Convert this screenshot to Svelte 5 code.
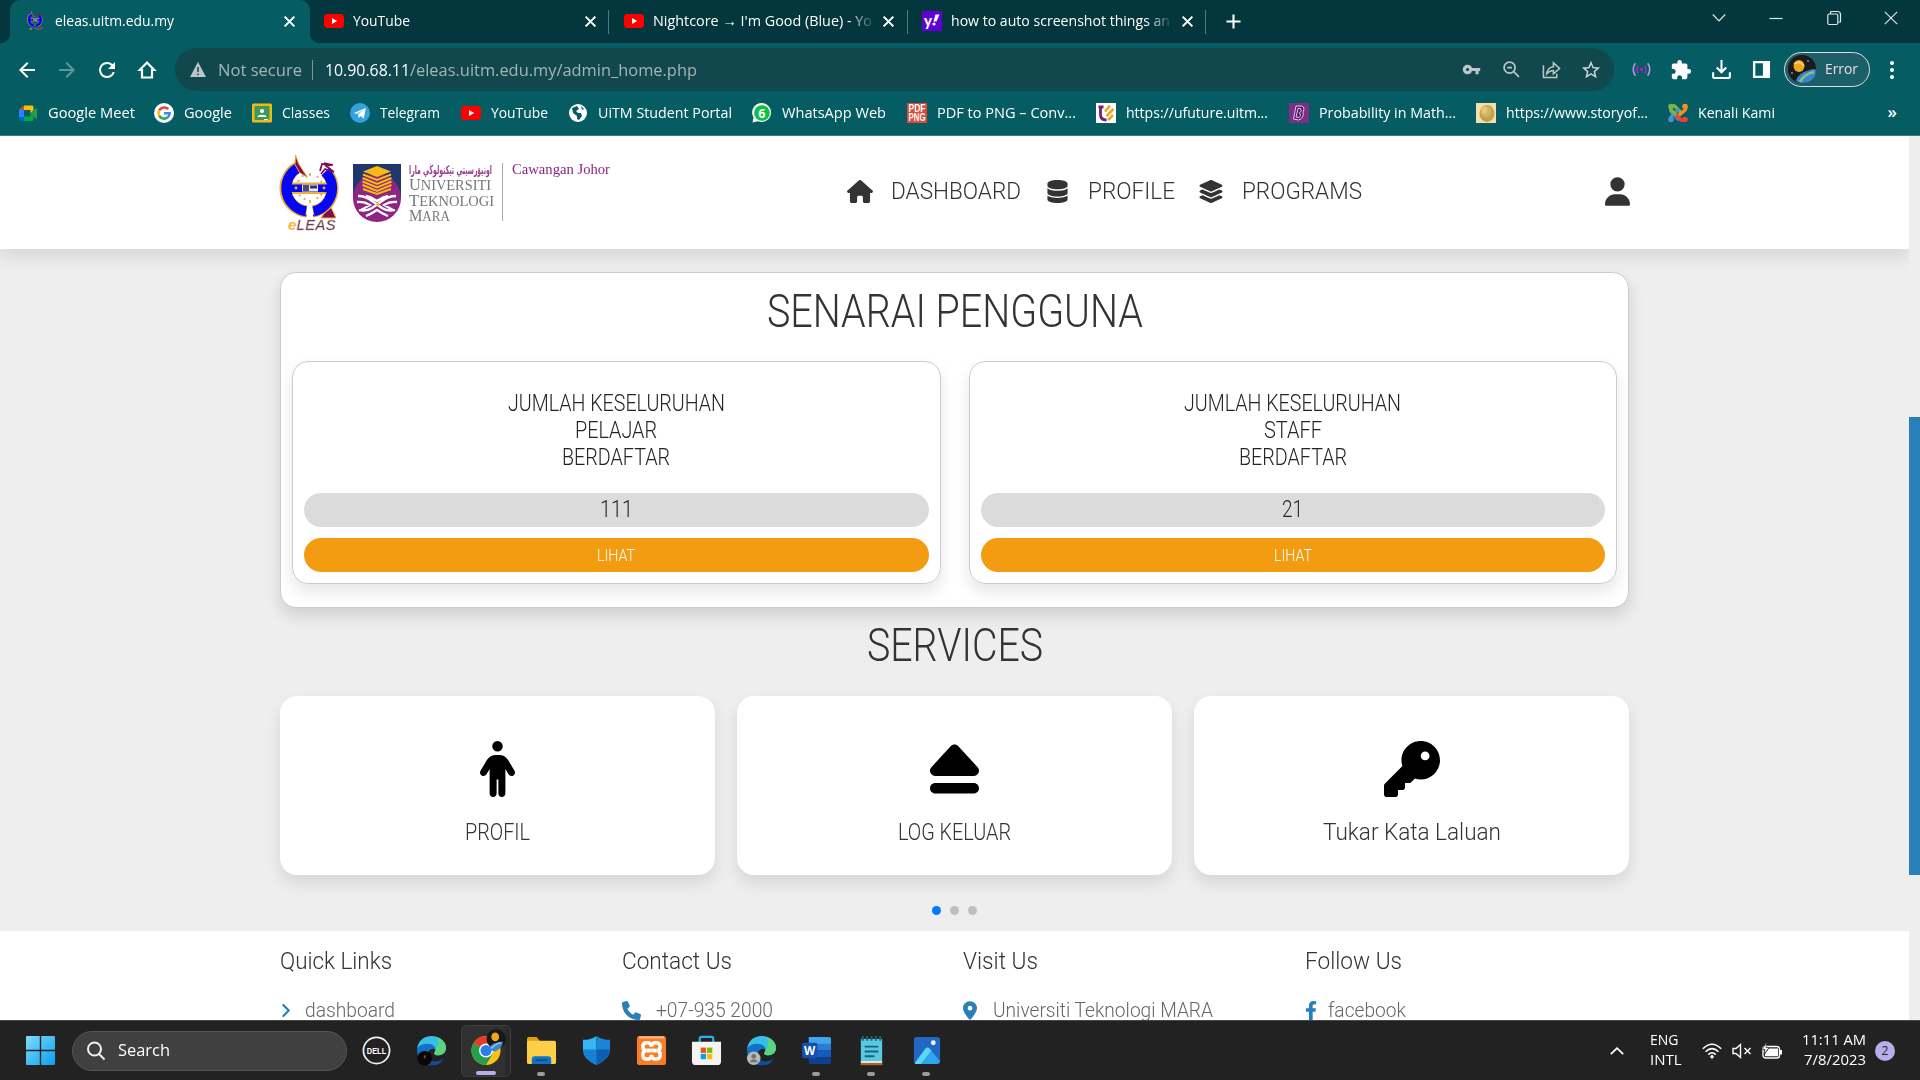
<script>
  // Scales a text run horizontally so that it fills the given width.
  function fit(node, width) {
    const natural = node.getBoundingClientRect().width;
    if (!natural) return;
    node.style.transform = `scaleX(${width / natural})`;
    node.style.marginRight = `${width - natural}px`;
  }

  const fa = {
    home: [576, 'M575.8 255.5c0 18-15 32.1-32 32.1h-32l.7 160.2c0 2.7-.2 5.4-.5 8.1V472c0 22.1-17.9 40-40 40H456c-1.1 0-2.2 0-3.3-.1c-1.4 .1-2.8 .1-4.2 .1H416 392c-22.1 0-40-17.9-40-40V448 384c0-17.7-14.3-32-32-32H256c-17.7 0-32 14.3-32 32v64 24c0 22.1-17.9 40-40 40H160 128.1c-1.5 0-3-.1-4.5-.2c-1.2 .1-2.4 .2-3.6 .2H104c-22.1 0-40-17.9-40-40V360c0-.9 0-1.9 .1-2.8V287.6H32c-18 0-32-14-32-32.1c0-9 3-17 10-24L266.4 8c7-7 15-8 22-8s15 2 21 7L564.8 231.5c8 7 12 15 11 24z'],
    database: [448, 'M448 80v48c0 44.2-100.3 80-224 80S0 172.2 0 128V80C0 35.8 100.3 0 224 0S448 35.8 448 80zM393.2 214.7c20.8-7.4 39.9-16.9 54.8-28.6V288c0 44.2-100.3 80-224 80S0 332.2 0 288V186.1c14.9 11.8 34 21.2 54.8 28.6C99.7 230.7 159.5 240 224 240s124.3-9.3 169.2-25.3zM0 346.1c14.9 11.8 34 21.2 54.8 28.6C99.7 390.7 159.5 400 224 400s124.3-9.3 169.2-25.3c20.8-7.4 39.9-16.9 54.8-28.6V432c0 44.2-100.3 80-224 80S0 476.2 0 432V346.1z'],
    layers: [576, 'M264.5 5.2c14.9-6.9 32.1-6.9 47 0l218.6 101c8.5 3.9 13.9 12.4 13.9 21.8s-5.4 17.9-13.9 21.8l-218.6 101c-14.9 6.9-32.1 6.9-47 0L45.9 149.8C37.4 145.8 32 137.3 32 128s5.4-17.9 13.9-21.8L264.5 5.2zM476.9 209.6l53.2 24.6c8.5 3.9 13.9 12.4 13.9 21.8s-5.4 17.9-13.9 21.8l-218.6 101c-14.9 6.9-32.1 6.9-47 0L45.9 277.8C37.4 273.8 32 265.3 32 256s5.4-17.9 13.9-21.8l53.2-24.6 152 70.2c23.4 10.8 50.4 10.8 73.8 0l152-70.2zm-152 198.2l152-70.2 53.2 24.6c8.5 3.9 13.9 12.4 13.9 21.8s-5.4 17.9-13.9 21.8l-218.6 101c-14.9 6.9-32.1 6.9-47 0L45.9 405.8C37.4 401.8 32 393.3 32 384s5.4-17.9 13.9-21.8l53.2-24.6 152 70.2c23.4 10.8 50.4 10.8 73.8 0z'],
    user: [448, 'M224 256A128 128 0 1 0 224 0a128 128 0 1 0 0 256zm-45.7 48C79.8 304 0 383.8 0 482.3C0 498.7 13.3 512 29.7 512H418.3c16.4 0 29.7-13.3 29.7-29.7C448 383.8 368.2 304 269.7 304H178.3z'],
    person: [320, 'M112 48a48 48 0 1 1 96 0 48 48 0 1 1 -96 0zm40 304V480c0 17.7-14.3 32-32 32s-32-14.3-32-32V256.9L59.4 304.5c-9.1 15.1-28.8 20-43.9 10.9s-20-28.8-10.9-43.9l58.3-97c17.4-28.9 48.6-46.6 82.3-46.6h29.7c33.7 0 64.9 17.7 82.3 46.6l58.3 97c9.1 15.1 4.2 34.8-10.9 43.9s-34.8 4.2-43.9-10.9L232 256.9V480c0 17.7-14.3 32-32 32s-32-14.3-32-32V352H152z'],
    eject: [448, 'M224 32c13.5 0 26.3 5.6 35.4 15.6l176 192c12.9 14 16.2 34.3 8.6 51.8S419 320 400 320H48c-19 0-36.3-11.2-43.9-28.7s-4.3-37.7 8.6-51.8l176-192C197.7 37.6 210.5 32 224 32zM0 432c0-26.5 21.5-48 48-48H400c26.5 0 48 21.5 48 48s-21.5 48-48 48H48c-26.5 0-48-21.5-48-48z'],
    key: [512, 'M336 352c97.2 0 176-78.8 176-176S433.2 0 336 0S160 78.8 160 176c0 18.7 2.9 36.8 8.3 53.7L7 391c-4.5 4.5-7 10.6-7 17v80c0 13.3 10.7 24 24 24h80c13.3 0 24-10.7 24-24V448h40c13.3 0 24-10.7 24-24V384h40c6.4 0 12.5-2.5 17-7l33.3-33.3c16.9 5.4 35 8.3 53.7 8.3zM376 96a40 40 0 1 1 0 80 40 40 0 1 1 0-80z'],
    phone: [512, 'M164.9 24.6c-7.7-18.6-28-28.5-47.4-23.2l-88 24C12.1 30.2 0 46 0 64C0 311.4 200.6 512 448 512c18 0 33.8-12.1 38.6-29.5l24-88c5.3-19.4-4.6-39.7-23.2-47.4l-96-40c-16.3-6.8-35.2-2.1-46.3 11.6L304.7 368C234.3 334.7 177.3 277.7 144 207.3L193.3 167c13.7-11.2 18.4-30 11.6-46.3l-40-96z'],
    pin: [384, 'M215.7 499.2C267 435 384 279.4 384 192C384 86 298 0 192 0S0 86 0 192c0 87.4 117 243 168.3 307.2c12.3 15.3 35.1 15.3 47.4 0zM192 128a64 64 0 1 1 0 128 64 64 0 1 1 0-128z'],
    angle: [320, 'M278.6 233.4c12.5 12.5 12.5 32.8 0 45.3l-160 160c-12.5 12.5-32.8 12.5-45.3 0s-12.5-32.8 0-45.3L210.7 256 73.4 118.6c-12.5-12.5-12.5-32.8 0-45.3s32.8-12.5 45.3 0l160 160z'],
    facebook: [320, 'M279.14 288l14.22-92.66h-88.91v-60.13c0-25.35 12.42-50.06 52.24-50.06h40.42V6.26S260.43 0 225.36 0c-73.22 0-121.08 44.38-121.08 124.72v70.62H22.89V288h81.39v224h100.17V288z'],
  };

  const tabs = [
    { icon: 'eleas', text: 'eleas.uitm.edu.my', w: 119, active: true },
    { icon: 'youtube', text: 'YouTube', w: 57 },
    { icon: 'youtube', text: "Nightcore → I'm Good (Blue) - Yo", w: 219, fade: true },
    { icon: 'yahoo', text: 'how to auto screenshot things an', w: 219, fade: true },
  ];

  const bookmarks = [
    ['meet', 'Google Meet', 87, 0],
    ['google', 'Google', 48, 19],
    ['classes', 'Classes', 48, 20],
    ['telegram', 'Telegram', 60, 20],
    ['youtube', 'YouTube', 57, 21],
    ['globe', 'UiTM Student Portal', 134, 20],
    ['whatsapp', 'WhatsApp Web', 104, 20],
    ['pdf', 'PDF to PNG – Conv...', 139, 21],
    ['ufuture', 'https://ufuture.uitm...', 142, 20],
    ['prob', 'Probability in Math...', 137, 21],
    ['story', 'https://www.storyof...', 142, 20],
    ['joomla', 'Kenali Kami', 77, 20],
  ];

  const nav = [
    ['home', 'DASHBOARD', 130],
    ['database', 'PROFILE', 87],
    ['layers', 'PROGRAMS', 120],
  ];

  const counts = [
    { lines: [['JUMLAH KESELURUHAN', 217], ['PELAJAR', 82], ['BERDAFTAR', 108]], n: '111', nw: 33 },
    { lines: [['JUMLAH KESELURUHAN', 217], ['STAFF', 58], ['BERDAFTAR', 108]], n: '21', nw: 21 },
  ];

  const services = [
    ['person', 'PROFIL', 65],
    ['eject', 'LOG KELUAR', 113],
    ['key', 'Tukar Kata Laluan', 178],
  ];

  const footer = [
    ['Quick Links', 112, 'angle', 'dashboard', 90],
    ['Contact Us', 110, 'phone', '+07-935 2000', 117],
    ['Visit Us', 75, 'pin', 'Universiti Teknologi MARA', 220],
    ['Follow Us', 97, 'facebook', 'facebook', 78],
  ];

  const apps = [
    ['dell', ''], ['edge', ''], ['chrome', 'on'], ['folder', 'dot'], ['defender', ''], ['xampp', ''],
    ['store', ''], ['edge2', ''], ['word', 'dot'], ['notepad', 'dot'], ['photos', 'dot'],
  ];
</script>

{#snippet faIcon(name, cls)}
  <svg class={cls} viewBox="0 0 {fa[name][0]} 512" fill="currentColor"><path d={fa[name][1]} /></svg>
{/snippet}

{#snippet close()}
  <svg class="x" viewBox="0 0 12 12"><path d="M1.5 1.5l9 9M10.5 1.5l-9 9" stroke="#fff" stroke-width="1.9" /></svg>
{/snippet}

{#snippet eleasMark(cls)}
  <svg class={cls} viewBox="0 0 59 78">
    <path d="M50 51l6 13H41z" fill="#850a55" stroke="#efaf32" />
    <g fill="none" stroke="#efaf32" stroke-width="12"><path d="M17.8 13.4A23.500 23.500 0 0 0 26.600 57.500M45.500 17.500A23.500 23.500 0 0 1 33 57.500" /></g>
    <path d="M5 30H55M5 38.500H55" stroke="#efaf32" stroke-width="3" />
    <g fill="none" stroke="#0506f5" stroke-width="10"><path d="M17.600 14A23.500 23.500 0 0 0 26 57.300M45.200 17.700A23.500 23.500 0 0 1 33.600 57.300" /></g>
    <path d="M5 30.500h50v7.500H5z" fill="#0506f5" />
    <path d="M26 60.500v2M33.500 60.500v2" stroke="#0506f5" stroke-width="1" />
    <path d="M22 30.500h16v7H22z" fill="#e9e9f2" /><path d="M23 31h6v6h-6z" fill="#554a66" /><path d="M30 33h7" stroke="#336" stroke-width="3" />
    <circle cx="16" cy="34" r="1.400" fill="#e5ac3a" /><circle cx="44" cy="34" r="1.400" fill="#e5ac3a" />
    <path d="M17.500 27.500l2-1M22 22.500l1.500-1M30 19v3M38 22l-1 2M42 27l-1.500 1M19 42l1.500-1M24 46l1-2M30 46v3M38 45l-1-2M42 41l-1.500-1" stroke="#c9a75a" stroke-width="1.600" />
    <path d="M15.500 1l3 8.500 9 14-8-5-4.500-8z" fill="#850a55" stroke="#efaf32" stroke-width="1" />
    <path d="M40 17l2-7 10 1-6 1 8 6-9-3-4 5M44 9l9 2" fill="none" stroke="#850a55" stroke-width="1.700" />
    <text x="8" y="76" font-family="Liberation Sans" font-style="italic" font-size="15" font-weight="bold" fill="#f5b834">e</text>
    <text x="16.500" y="76" font-family="Liberation Sans" font-style="italic" font-size="14.500" fill="#2b1a86" stroke="#e4a844" stroke-width=".35" textLength="39">LEAS</text>
  </svg>
{/snippet}

{#snippet fav(name)}
  {#if name === 'eleas'}
    {@render eleasMark('fav')}
  {:else}
    <svg class="fav" viewBox="0 0 20 20">
      {#if name === 'youtube'}
        <rect y="3" width="20" height="14" rx="3.500" fill="#f00" /><path d="M8 7l5.200 3L8 13z" fill="#fff" />
      {:else if name === 'yahoo'}
        <rect width="20" height="20" fill="#5f01d1" /><text x="2" y="14.500" font-family="Lato" font-weight="900" font-size="15" fill="#fff">y</text>
        <path d="M13.500 3.500h4l-3 7h-3z" fill="#fff" /><circle cx="12" cy="13" r="1.600" fill="#fff" />
      {:else if name === 'meet'}
        <path d="M1 6.500l5-4v4z" fill="#ea4335" /><path d="M6 2.500h8.500l1 1v4l-3 3V7H6z" fill="#fbbc04" /><path d="M1 6.500h5V14H1z" fill="#2684fc" /><path d="M1 14h5v4H2l-1-1z" fill="#0066da" /><path d="M6 13.500h6.500V10l3 3v4l-1 1H6z" fill="#00ac47" /><path d="M12.500 10L18 5l1 .5v10l-1 .5z" fill="#2a9b46" />
      {:else if name === 'google'}
        <circle cx="10" cy="10" r="10" fill="#fff" />
        <g fill="none" stroke-width="2.600"><path d="M14.200 6.200A5.600 5.600 0 0 0 5.200 7.400" stroke="#ea4335" /><path d="M5.200 7.300a5.600 5.600 0 0 0 0 5.400" stroke="#fbbc05" /><path d="M5.200 12.600a5.600 5.600 0 0 0 8.600 1.600" stroke="#34a853" /><path d="M13.800 14.300A5.600 5.600 0 0 0 15.600 10.300H10" stroke="#4285f4" /></g>
      {:else if name === 'classes'}
        <rect width="20" height="19" y=".5" rx="1.500" fill="#f5b912" /><rect x="2.500" y="3" width="15" height="14" fill="#3c9a58" /><circle cx="10" cy="8" r="2.100" fill="#fff" /><path d="M5.500 14c0-3 9-3 9 0z" fill="#fff" /><path d="M12 16h4v1h-4z" fill="#fff" />
      {:else if name === 'telegram'}
        <circle cx="10" cy="10" r="10" fill="#34a2dc" /><path d="M3.800 9.900l12-4.900-2 10.500-3.400-2.500-1.900 1.900-.4-3.300 5-4.700-6.300 4z" fill="#fff" />
      {:else if name === 'globe'}
        <circle cx="10" cy="10" r="9" fill="#fff" /><path d="M4 5l5-2 2 3-3 2 2 2h3l1 3-3 4-2-1v-3l-4-3zM13 3l3 3-2 1z" fill="#055c63" />
      {:else if name === 'whatsapp'}
        <path d="M.5 19.500l1-5A9.500 9.500 0 1 1 6 18.300z" fill="#f3f6f3" /><circle cx="10" cy="10" r="7.800" fill="#0bbf47" /><text x="6.300" y="14.500" font-family="Open Sans" font-weight="700" font-size="12.500" fill="#fff">6</text>
      {:else if name === 'pdf'}
        <rect width="20" height="20" fill="#db4a3b" /><g font-family="Liberation Sans" font-weight="700" font-size="10.500" fill="#fff"><text x="1.500" y="9.300" textLength="17" lengthAdjust="spacingAndGlyphs">PDF</text><text x="1.500" y="18.300" textLength="17" lengthAdjust="spacingAndGlyphs">PNG</text></g>
      {:else if name === 'ufuture'}
        <rect width="20" height="20" fill="#fff" /><path d="M4.500 4.500v7q0 5.500 6 5.500M2.500 4h5" stroke="#6c2086" stroke-width="2.800" fill="none" /><path d="M14 2.500L9 8.500M17.500 6l-7 7M17 12l-5 5" stroke="#f2a51c" stroke-width="2.500" />
      {:else if name === 'prob'}
        <rect width="20" height="20" fill="#7d2e86" /><path d="M7 3h5.500q4 1 1.500 6 1.500 6-4.500 8L4.500 16z" fill="#5b1c66" stroke="#e6c4ea" /><path d="M9 5.500l-2 8.500 3 .5q3-2.500.5-4.500 3-2 1-4.500z" fill="none" stroke="#e6c4ea" />
      {:else if name === 'story'}
        <rect width="20" height="20" fill="#f7dfa8" /><ellipse cx="11" cy="10.500" rx="7.500" ry="8.500" fill="#c0a04e" /><ellipse cx="10" cy="8.500" rx="5.500" ry="6" fill="#cfb35f" /><ellipse cx="8.500" cy="7" rx="3" ry="3.500" fill="#e0c77c" />
      {:else if name === 'joomla'}
        <g fill="none" stroke-width="3.400" stroke-linecap="round"><path d="M3 4v4l7 8" stroke="#4a90cf" /><path d="M3 3.500q3-2 5 1l5 5" stroke="#7ab63e" /><path d="M17 3q2 3-1 5l-6 5" stroke="#f39021" /><path d="M3 17q-1-3 2-5l5-5" stroke="#4a90cf" /><path d="M17 17q-3 1-5-1l-4-4" stroke="#ee4035" /><path d="M3 4v3l4 4" stroke="#7ab63e" /></g>
        <circle cx="3" cy="3.500" r="2.800" fill="#7ab63e" /><circle cx="17" cy="3.500" r="2.800" fill="#f39021" /><circle cx="3" cy="16.500" r="2.800" fill="#4a90cf" /><circle cx="17" cy="16.500" r="2.800" fill="#ee4035" />
      {/if}
    </svg>
  {/if}
{/snippet}

{#snippet edgeMark()}
  <path d="M1 15C2 6 8 1 16 1c9 0 15 6 15 12 0 5-4 8-8 8-3 0-4-1-4-2 0-2 1-1 1-4 0-3-3-5-7-5-6 0-11 3-12 5z" fill="#39bfe5" />
  <path d="M22 2.500c6 2 9 6 9 11 0 5-4 7.500-8 7.500-3 0-4-1-4-2 0-2 1-1 1-4 3-3 4-7 2-12.500z" fill="#59d57d" />
  <path d="M1 15c1-4 6-6 11-6 5 0 8 3 8 6-1-1-3-1-5 0-3 2-4 5-2 9 2 3 7 6 14 3-3 3-7 4-11 4C7 31 1 24 1 15z" fill="#1272c8" />
  <path d="M13 24c2 4 9 5 16 0-3 5-9 8-15 7-5-2-7-9-3-14 0 2 0 4 2 7z" fill="#0d4f9e" />
{/snippet}

{#snippet appIcon(name)}
  <svg class="app-icon" viewBox="0 0 32 32">
    {#if name === 'dell'}
      <circle cx="16" cy="16" r="13.500" fill="none" stroke="#f2f2f2" stroke-width="1.800" /><text x="6" y="19.500" font-family="Liberation Sans" font-weight="700" font-size="10" fill="#fff" textLength="20" lengthAdjust="spacingAndGlyphs">DELL</text>
    {:else if name === 'edge'}
      {@render edgeMark()}<circle cx="9" cy="24" r="7.500" fill="#090707" /><path d="M9 21v3" stroke="#7b4937" stroke-width="2" />
    {:else if name === 'edge2'}
      {@render edgeMark()}<circle cx="8" cy="24" r="7" fill="#b9b9b9" /><circle cx="8" cy="22" r="2.500" fill="#737373" /><path d="M4 28c1-4 7-4 8 0z" fill="#737373" />
    {:else if name === 'chrome'}
      <circle cx="15.500" cy="16" r="15" fill="#fbc116" /><path d="M15.500 16L2.500 8.500A15 15 0 0 1 28.500 8.500H16z" fill="#e33b2e" /><path d="M15.500 16L2.500 8.500A15 15 0 0 0 15.500 31l6.500-11z" fill="#269f4b" /><circle cx="15.500" cy="16" r="7.200" fill="#fff" /><circle cx="15.500" cy="16" r="5.700" fill="#2b7de9" />
      <circle cx="26" cy="4" r="10" fill="#181818" /><path d="M18 13q6-6 15-6-1 7-7 9.500-6 1-8-3.500z" fill="#3a86da" /><path d="M21 14q4-5 10-6" fill="none" stroke="#8fc0dd" stroke-width="1.500" /><ellipse cx="25" cy="2" rx="4" ry="4.500" fill="#eda91d" />
    {:else if name === 'folder'}
      <path d="M1 4q0-2 2-2h8l3 4v6H1z" fill="#e29d0c" /><path d="M1 8q0-2 2-2h26q2 0 2 2v20q0 2-2 2H3q-2 0-2-2z" fill="#fccf47" /><path d="M6 30v-5q0-3 3-3h14q3 0 3 3v5z" fill="#0f73c5" /><path d="M10 26h12" stroke="#0a4c8a" stroke-width="2" />
    {:else if name === 'defender'}
      <path d="M16 1q-6 4-14 4v10q0 10 14 16z" fill="#35b5f3" /><path d="M16 1q6 4 14 4v10q0 10-14 16z" fill="#1b83da" /><path d="M2 15h14v16Q3 25 2 15z" fill="#1780d6" /><path d="M16 15h14q-1 10-14 16z" fill="#0c5fb0" />
    {:else if name === 'xampp'}
      <rect x="1" y="1" width="30" height="30" rx="3" fill="#f97d27" /><path d="M3 2.500h26" stroke="#ffb98a" stroke-width="2" /><path d="M11.500 8q-4.500 0-4.500 4t4 4q-4 0-4 4.500t4.500 4.500 4.500-4.500q0 4.500 4.500 4.500t4.500-4.500-4-4.500q4 0 4-4T20.500 8 16 12q0-4-4.500-4z" fill="none" stroke="#fff" stroke-width="3.600" /><path d="M11 16h10" stroke="#fff" stroke-width="4" />
    {:else if name === 'store'}
      <path d="M9 8V4q0-2 2-2h10q2 0 2 2v4" fill="none" stroke="#2bb2ee" stroke-width="2.200" /><path d="M1 7h30v20q0 4-4 4H5q-4 0-4-4z" fill="#f4f4f4" /><path d="M10 13h5.500v5.500H10z" fill="#f25022" /><path d="M16.500 13H22v5.500h-5.500z" fill="#7fba00" /><path d="M10 19.500h5.500V25H10z" fill="#00a4ef" /><path d="M16.500 19.500H22V25h-5.500z" fill="#ffb900" />
    {:else if name === 'word'}
      <path d="M8 2h21q2 0 2 2v6H8z" fill="#41a5ee" /><path d="M8 9h23v7H8z" fill="#2b7cd3" /><path d="M8 16h23v7H8z" fill="#185abd" /><path d="M8 23h23v5q0 2-2 2H10q-2 0-2-2z" fill="#103f91" /><rect x="1" y="8" width="16" height="16" rx="2" fill="#1650ac" /><text x="3" y="20.500" font-family="Open Sans" font-weight="700" font-size="12" fill="#fff">W</text>
    {:else if name === 'notepad'}
      <path d="M5 4h22v24H5z" fill="#58c8e4" /><path d="M5 27h22v4H5z" fill="#e8f0f2" /><path d="M5 30h22" stroke="#b3631f" stroke-width="2.400" /><path d="M7 1v5M11.500 1v5M16 1v5M20.500 1v5M25 1v5" stroke="#15647a" stroke-width="2" /><path d="M9 12h14M9 17h14M9 22h10" stroke="#15647a" stroke-width="2" />
    {:else if name === 'photos'}
      <rect x="3" y="2" width="27" height="28" rx="3" fill="#2367c4" /><path d="M4 29L15 14q2-2 4 0l11 13q-1 3-3 3H6q-2 0-2-1z" fill="#2ea5ec" /><path d="M4 29L15 14q2-2 4 0l2 2-11 14H6q-2 0-2-1z" fill="#5ad6f7" /><circle cx="23" cy="8" r="2.500" fill="#e9f4ff" />
    {/if}
  </svg>
{/snippet}

<div class="screen">
  <div class="tabstrip">
    {#each tabs as tab, i}
      <div class="tab" class:active={tab.active} class:sep={i > 0}>
        {@render fav(tab.icon)}
        <div class="tab-text" class:fade={tab.fade}><span class="fit" use:fit={tab.w}>{tab.text}</span></div>
        {@render close()}
      </div>
    {/each}
    <svg class="plus" viewBox="0 0 16 16"><path d="M8 .5v15M.5 8h15" stroke="#fff" stroke-width="2.200" /></svg>
    <div class="window-controls">
      <svg viewBox="0 0 14 14"><path d="M.8 3.500L7 10l6.200-6.500" /></svg>
      <svg viewBox="0 0 14 14"><path d="M.5 7.500h13" /></svg>
      <svg viewBox="0 0 14 14"><rect x=".8" y="3" width="10" height="10.500" rx="1.500" /><path d="M3.500 3V1.500q0-1 1-1h6q3 0 3 3v7.500h-2" /></svg>
      <svg viewBox="0 0 14 14"><path d="M.8.8l12.400 12.400M13.200.8L.8 13.200" /></svg>
    </div>
  </div>

  <div class="toolbar">
    <div class="btn"><svg viewBox="0 0 24 24" fill="#fff"><path d="M20 11H7.830l5.590-5.590L12 4l-8 8 8 8 1.410-1.410L7.830 13H20v-2z" /></svg></div>
    <div class="btn"><svg viewBox="0 0 24 24" fill="#60979c"><path d="M12 4l-1.410 1.410L16.170 11H4v2h12.170l-5.580 5.590L12 20l8-8z" /></svg></div>
    <div class="btn"><svg viewBox="0 0 24 24" fill="#fff"><path d="M17.650 6.350A7.960 7.960 0 0 0 12 4a8 8 0 1 0 7.730 10h-2.080A6 6 0 1 1 12 6c1.660 0 3.140.69 4.220 1.780L13 11h7V4l-2.350 2.350z" /></svg></div>
    <div class="btn"><svg viewBox="0 0 24 24" fill="none" stroke="#fff" stroke-width="2.200"><path d="M7 19.500V12H4.800L12 4.500l7.200 7.500H17v7.500z" /></svg></div>
    <div class="omnibox">
      <svg class="warn" viewBox="0 0 16 15"><path d="M8 0l8 15H0z" fill="#bcc6c7" /><path d="M8 5v5M8 11.500v1.800" stroke="#10484e" stroke-width="1.500" /></svg>
      <span class="fit muted secure" use:fit={84}>Not secure</span>
      <i class="bar"></i>
      <span class="fit host" use:fit={85}>10.90.68.11</span><span class="fit muted" use:fit={287}>/eleas.uitm.edu.my/admin_home.php</span>
      <div class="omni-icons">
        <div class="btn"><svg class="s20" viewBox="0 0 24 24" fill="#bcc6c7"><path d="M12.650 10A5.990 5.990 0 0 0 7 6c-3.310 0-6 2.690-6 6s2.690 6 6 6a5.990 5.990 0 0 0 5.650-4H17v4h4v-4h2v-4H12.650zM7 14c-1.100 0-2-.9-2-2s.9-2 2-2 2 .9 2 2-.9 2-2 2z" /></svg></div>
        <div class="btn"><svg class="s20" viewBox="0 0 20 20" fill="none" stroke="#bcc6c7" stroke-width="1.800"><circle cx="8" cy="8" r="5.800" /><path d="M12.300 12.300l5.500 5.500M5.500 8h5" /></svg></div>
        <div class="btn"><svg class="s20" viewBox="0 0 20 20" fill="none" stroke="#bcc6c7" stroke-width="1.600"><path d="M1.500 5.500v13h14v-4M5 14.500q1-7 7-7.500V3l6.500 6-6.500 5.500v-3.500q-4 0-7 3.500z" /></svg></div>
        <div class="btn"><svg class="s22" viewBox="0 0 24 24" fill="#d3d9da"><path d="M22 9.240l-7.190-.62L12 2 9.190 8.630 2 9.240l5.460 4.730L5.820 21 12 17.270 18.180 21l-1.630-7.030L22 9.240zM12 15.400l-3.760 2.270 1-4.280-3.320-2.880 4.380-.38L12 6.100l1.710 4.040 4.380.38-3.320 2.880 1 4.280L12 15.400z" /></svg></div>
      </div>
    </div>
    <div class="extensions">
      <div class="btn"><svg class="s20" viewBox="0 0 20 20" fill="none" stroke-width="1.700"><circle cx="10" cy="10" r="2" fill="#a21fc0" /><path d="M6.500 6q-2.500 4 0 8M13.500 6q2.500 4 0 8" stroke="#a02cc6" /><path d="M3.500 3.500q-4.500 6.500 0 13M16.500 3.500q4.500 6.500 0 13" stroke="#b993dd" /></svg></div>
      <div class="btn"><svg class="s22" viewBox="0 0 24 24" fill="#fff"><path d="M20.500 11H19V7c0-1.100-.9-2-2-2h-4V3.500a2.500 2.500 0 0 0-5 0V5H4c-1.100 0-1.990.9-1.990 2v3.800H3.500c1.490 0 2.700 1.210 2.700 2.700s-1.210 2.700-2.700 2.700H2V20c0 1.100.9 2 2 2h3.800v-1.500c0-1.490 1.210-2.700 2.700-2.700s2.700 1.210 2.700 2.700V22H17c1.100 0 2-.9 2-2v-4h1.500a2.500 2.500 0 0 0 0-5z" /></svg></div>
      <div class="btn"><svg class="s20" viewBox="0 0 20 20" fill="none" stroke="#fff" stroke-width="2.200"><path d="M10 0v12M5 8l5 5 5-5M1.200 13v5q0 1 1 1h15.600q1 0 1-1v-5" /></svg></div>
      <div class="btn"><svg class="s20" viewBox="0 0 20 20"><path fill-rule="evenodd" d="M1 1h18v18H1zM3.500 3.500v13h8v-13z" fill="#fff" /></svg></div>
    </div>
    <div class="profile">
      <svg viewBox="0 0 28 28"><circle cx="14" cy="14" r="14" fill="#1b1b1d" /><path d="M8 26q2-9 18-12 2 0 2 2-1 11-13 12-4 0-7-2z" fill="#3c84d6" /><path d="M12 27q4-8 14-10" stroke="#86c46a" stroke-width="2.500" fill="none" /><ellipse cx="11" cy="11" rx="5.500" ry="6" fill="#f0a81d" /><path d="M6 9q5-4 10 2" stroke="#fbd66a" stroke-width="1.500" fill="none" /><circle cx="20" cy="6" r=".8" fill="#ddd" /><circle cx="4" cy="18" r=".8" fill="#ddd" /></svg>
      <span class="fit" use:fit={33}>Error</span>
    </div>
    <svg class="more" viewBox="0 0 6 20" fill="#fff"><circle cx="3" cy="3" r="2" /><circle cx="3" cy="10" r="2" /><circle cx="3" cy="17" r="2" /></svg>
  </div>

  <div class="bookmarks">
    {#each bookmarks as [icon, text, w, gap]}
      <div class="bookmark" style:margin-left="{gap}px">{@render fav(icon)}<span class="fit" use:fit={w}>{text}</span></div>
    {/each}
    <b class="overflow">»</b>
  </div>

  <div class="viewport">
    <div class="page">
      <header>
        {@render eleasMark('eleas')}
        <svg class="shield" viewBox="0 0 48 58">
          <path d="M0 0h48v34H0z" fill="#21376c" /><circle cx="24" cy="34" r="24" fill="#8d2583" />
          <path d="M24 2l14 5.500L24 13 10 7.500z" fill="#fdb913" />
          <path d="M10 10.500l14 5.500 14-5.500M9.500 14l14.500 6 14.500-6M9.500 17.500l14.500 6 14.500-6M9.500 21l14.500 6 14.500-6M10 25l14 5 14-5" fill="none" stroke="#fdb913" stroke-width="2" />
          <path d="M5 32q8 0 14 5l10 7q6 4 13 2M43 32q-8 0-14 5l-10 7q-6 4-13 2M4 38q7-1 13 3l-9 5M44 38q-7-1-13 3l9 5M13 52q5-2 11-6 6 4 11 6M13 32q5 1 11 5 6-4 11-5" fill="none" stroke="#fff" stroke-width="2.300" />
          <path d="M22 40.500l4-2v4z" fill="#fdb913" />
        </svg>
        <div class="uitm">
          <span class="fit arabic" use:fit={83} dir="rtl">اونيۏرسيتي تيكنولوڬي مارا</span>
          <span class="fit" use:fit={82}>U<small>NIVERSITI</small></span>
          <span class="fit" use:fit={85}>T<small>EKNOLOGI</small></span>
          <span class="fit" use:fit={41}>M<small>ARA</small></span>
        </div>
        <div class="branch"><span class="fit" use:fit={98}>Cawangan Johor</span></div>
        <nav>
          {#each nav as [icon, text, w]}
            <a class="nav-item {icon}" href="#{icon}">{@render faIcon(icon, 'nav-icon')}<span class="fit" use:fit={w}>{text}</span></a>
          {/each}
        </nav>
        {@render faIcon('user', 'user')}
      </header>

      <main>
        <section class="users">
          <h1><span class="fit" use:fit={376}>SENARAI PENGGUNA</span></h1>
          <div class="count-row">
            {#each counts as c}
              <div class="count">
                {#each c.lines as [line, w]}<div class="line"><span class="fit" use:fit={w}>{line}</span></div>{/each}
                <div class="pill number"><span class="fit" use:fit={c.nw}>{c.n}</span></div>
                <div class="pill view"><span class="fit" use:fit={38}>LIHAT</span></div>
              </div>
            {/each}
          </div>
        </section>

        <h1 class="services-title"><span class="fit" use:fit={176}>SERVICES</span></h1>
        <div class="services">
          {#each services as [icon, text, w]}
            <div class="service">{@render faIcon(icon, 'service-icon')}<div><span class="fit" use:fit={w}>{text}</span></div></div>
          {/each}
        </div>
        <div class="dots"><i class="current"></i><i></i><i></i></div>
      </main>

      <footer>
        {#each footer as [title, tw, icon, text, w]}
          <div class="col">
            <h3><span class="fit" use:fit={tw}>{title}</span></h3>
            <p class={icon}>{@render faIcon(icon, 'foot-icon')}<span class="fit" use:fit={w}>{text}</span></p>
          </div>
        {/each}
      </footer>
    </div>
    <div class="scrollbar"><div class="thumb"></div></div>
  </div>

  <div class="taskbar">
    <svg class="start" viewBox="0 0 29 29"><defs><linearGradient id="win" x1="0" y1="0" x2="1" y2="1"><stop stop-color="#7edcfa" /><stop offset="1" stop-color="#0d9df2" /></linearGradient></defs><path d="M1 0h12.800v13.800H0V1q0-1 1-1zM15.200 0H28q1 0 1 1v12.800H15.200zM0 15.200h13.800V29H1q-1 0-1-1zM15.200 15.200H29V28q0 1-1 1H15.200z" fill="url(#win)" /></svg>
    <div class="search">
      <svg viewBox="0 0 20 20" fill="none" stroke="#f1f1f1" stroke-width="2"><circle cx="8.500" cy="8" r="6.500" /><path d="M13 13l5.500 5.500" /></svg>
      <span class="fit" use:fit={52}>Search</span>
    </div>
    <div class="apps">
      {#each apps as [name, state]}
        <div class="app {state}">{@render appIcon(name)}</div>
      {/each}
    </div>
    <div class="tray">
      <svg class="up" viewBox="0 0 14 8" fill="none" stroke="#fff" stroke-width="1.700"><path d="M.8 7.200L7 1.200l6.200 6" /></svg>
      <div class="lang"><span class="fit" use:fit={29}>ENG</span><span class="fit" use:fit={31}>INTL</span></div>
      <svg class="wifi" viewBox="0 0 20 16" fill="none" stroke="#fff" stroke-width="1.500"><path d="M.8 5.800q9.200-9 18.400 0M3.500 8.800q6.500-6.300 13 0M6.300 11.600q3.700-3.600 7.400 0" /><circle cx="10" cy="13.800" r="1.300" fill="#fff" stroke-width="1" /></svg>
      <svg class="vol" viewBox="0 0 20 16" fill="none" stroke="#fff" stroke-width="1.400"><path d="M1 5.500h3l4.500-4v13L4 10.500H1zM12.500 5l6 6M18.500 5l-6 6" /></svg>
      <svg class="battery" viewBox="0 0 20 16"><rect x="1" y="3.500" width="16.500" height="11.500" rx="2.500" fill="none" stroke="#fff" stroke-width="1.400" /><path d="M3 13.300V11l4-5.500h9v7.800zM18 7h2v4.500h-2z" fill="#fff" /><path d="M4.500 -1L.5 6.500H3l-1 5 5-7H4z" fill="#fff" stroke="#222" stroke-width=".6" /></svg>
      <div class="clock"><span class="fit" use:fit={64}>11:11 AM</span><span class="fit" use:fit={62}>7/8/2023</span></div>
      <div class="badge">2</div>
    </div>
  </div>
</div>

<style>
  :global(body) { overflow: hidden; background: #eee; }
  * { box-sizing: border-box; }
  svg { flex: none; display: block; overflow: visible; }
  .fit { display: inline-block; white-space: nowrap; transform-origin: 0 50%; flex: none; }

  .screen { width: 1920px; height: 1080px; display: flex; flex-direction: column; overflow: hidden; font-family: "Open Sans", "Noto Sans", sans-serif; color: #fff; }

  .tabstrip { height: 43px; flex: none; background: #03363d; display: flex; font-size: 15px; }
  .tab { width: 299px; height: 43px; padding: 0 12px 1px 14px; display: flex; align-items: center; position: relative; }
  .tab.active { width: 300px; margin-left: 10px; padding: 0 14px 1px 15px; background: #055c63; border-radius: 10px 10px 0 0; }
  .tab:nth-child(3) { padding-left: 15px; padding-right: 13px; }
  .tab:nth-child(4) { width: 298px; }
  .tab.active::before, .tab.active::after { content: ""; position: absolute; bottom: 0; width: 10px; height: 10px; }
  .tab.active::before { left: -10px; background: radial-gradient(circle at 0 0, #03363d 10px, #055c63 10.500px); }
  .tab.active::after { right: -10px; background: radial-gradient(circle at 100% 0, #03363d 10px, #055c63 10.500px); }
  .tab.sep { background: linear-gradient(#4d7c81, #4d7c81) right 10px / 1px 24px no-repeat; }
  .tab-text { width: 222px; margin-left: 9px; margin-right: auto; margin-top: -2px; }
  .tab.active .tab-text { margin-left: 10px; }
  .tab-text.fade { mask-image: linear-gradient(90deg, #000 195px, transparent 223px); }
  .fav { width: 20px; height: 20px; }
  .x { width: 13px; height: 13px; }
  .plus { width: 15px; height: 15px; margin: 14px 0 0 20px; }
  .window-controls { margin: 11px 22px 0 auto; display: flex; gap: 43.300px; }
  .window-controls svg { width: 14px; height: 14px; fill: none; stroke: #dfe7e8; stroke-width: 1.200; }

  .toolbar { height: 53px; flex: none; background: #055c63; display: flex; align-items: center; padding-left: 7px; font-size: 17px; }
  .btn { width: 40px; flex: none; display: flex; justify-content: center; align-items: center; }
  .btn svg { width: 24px; height: 24px; }
  .btn .s20 { width: 19px; height: 19px; }
  .btn .s22 { width: 22px; height: 22px; }
  .omnibox { width: 1439px; height: 43px; margin-left: 8px; border-radius: 22px; background: #10484e; display: flex; align-items: center; padding-left: 15px; }
  .warn { width: 16px; height: 15px; }
  .muted { color: #a3b5b7; }
  .secure { margin-left: 12px; }
  .bar { width: 1px; height: 20px; background: #7b979a; margin: 0 12px 0 10px; }
  .omni-icons { margin: 0 3px 0 auto; display: flex; align-items: center; }
  .extensions { display: flex; align-items: center; margin-left: 7px; }
  .profile { width: 86px; height: 35px; margin: -1px 0 0 3px; border: 1.500px solid #ead9dc; border-radius: 18px; background: #1b6068; display: flex; align-items: center; gap: 9px; padding-left: 3px; font-size: 14px; line-height: 18px; color: #f4dadd; }
  .profile svg { width: 28px; height: 28px; }
  .profile .fit { margin-top: -1px; }
  .more { width: 6px; height: 20px; margin-left: 19px; }

  .bookmarks { height: 40px; flex: none; background: #055c63; border-bottom: 1px solid #3a8087; display: flex; align-items: center; padding: 0 23px 6px 18px; font-size: 15px; }
  .bookmark { display: flex; align-items: center; gap: 10px; }
  .bookmark .fit { margin-top: -2px; }
  .overflow { margin: -3px 0 0 auto; font-size: 17px; line-height: 17px; font-weight: 600; }

  .viewport { height: 884px; flex: none; display: flex; background: #eee; }
  .page { width: 1909px; height: 884px; overflow: hidden; font-family: Roboto, sans-serif; font-weight: 300; color: #333; display: flex; flex-direction: column; }
  .scrollbar { width: 11px; padding-top: 281px; }
  .thumb { height: 458px; background: #2980b9; }

  header { height: 113px; flex: none; background: #fff; box-shadow: 0 8px 16px rgba(0, 0, 0, .1); padding: 0 279px 0 280px; display: flex; }
  .eleas { width: 59px; height: 78px; margin-top: 18px; }
  .shield { width: 48px; height: 58px; margin: 28px 0 0 14px; }
  .uitm { width: 94px; height: 58px; margin: 27px 0 0 8px; border-right: 1px solid #aaa; display: flex; flex-direction: column; align-items: flex-start; font: 16px/14.500px "Liberation Serif", serif; color: #75787b; }
  .uitm small { font-size: 14px; }
  .uitm .arabic { font: bold 12px/15px "DejaVu Sans", sans-serif; color: #9b3b93; height: 15px; }
  .branch { width: 100px; margin: 24px 0 0 9px; font: 15px/18px "Liberation Serif", serif; color: #8d2583; }
  nav { display: flex; margin: 40px 0 0 235px; height: 30px; font-size: 24px; line-height: 30px; }
  .nav-item { display: flex; align-items: center; color: #333; text-decoration: none; }
  .nav-icon { height: 23px; width: 26px; margin-right: 18px; }
  .nav-item.database { margin-left: 26px; }
  .database .nav-icon { width: 21px; margin-right: 20px; }
  .nav-item.layers { margin-left: 23px; }
  .user { width: 25px; height: 29px; margin: 41px 0 0 auto; color: #333; }

  main { flex: none; height: 682px; padding: 23px 280px 0 280px; }
  .users { height: 336px; border: 1px solid #ccc; border-radius: 16px; background: #fff; box-shadow: 0 8px 16px rgba(0, 0, 0, .13); padding: 0 11px; }
  h1 { margin: 0; height: 78px; line-height: 78px; font-size: 45.500px; font-weight: 300; text-align: center; }
  .users h1 { height: 88px; line-height: 77px; }
  .count-row { display: flex; gap: 28px; }
  .count { flex: 1; height: 223px; border: 1px solid #ccc; border-radius: 16px; box-shadow: 0 8px 16px rgba(0, 0, 0, .1); padding: 28px 11px 0; text-align: center; font-size: 24px; color: #212529; }
  .line { height: 27px; line-height: 27px; }
  .pill { height: 34px; line-height: 32px; border-radius: 17px; }
  .number { background: #dbdbdb; margin-top: 22px; }
  .view { background: #f39c12; color: #fff; margin-top: 11px; font-size: 17px; line-height: 35px; }
  .services-title { margin-top: -1px; }
  .services { display: flex; gap: 22.500px; margin-top: 11px; }
  .service { flex: 1; height: 179px; background: #fff; border-radius: 17px; box-shadow: 0 8px 16px rgba(0, 0, 0, .1); padding-top: 45px; display: flex; flex-direction: column; align-items: center; font-size: 24px; line-height: 30px; }
  .service-icon { height: 56px; margin-bottom: 20px; color: #000; }
  .dots { display: flex; justify-content: center; gap: 9px; margin-top: 31px; }
  .dots i { width: 9px; height: 9px; border-radius: 50%; background: #bfbfbf; }
  .dots .current { background: #007bff; }

  footer { flex: none; height: 200px; background: #fff; padding: 14px 0 0 280px; display: flex; }
  .col { width: 341.600px; flex: none; }
  h3 { margin: 0; font-size: 24px; line-height: 32px; font-weight: 300; }
  p { margin: 19px 0 0; display: flex; align-items: center; font-size: 20px; line-height: 28px; color: #666; }
  .foot-icon { height: 19px; color: #2980b9; margin-right: 15px; }
  .angle .foot-icon { width: 11px; margin-right: 14px; }
  .pin .foot-icon { width: 14px; margin-right: 16px; }
  .facebook .foot-icon { width: 12px; margin-right: 11px; }

  .taskbar { height: 60px; flex: none; background: #222; border-top: 1px solid #454a45; display: flex; align-items: center; padding-left: 26px; }
  .start { width: 29px; height: 29px; }
  .search { width: 275px; height: 40px; margin-left: 17px; border-radius: 20px; background: #404040; border: 1px solid #555; display: flex; align-items: center; padding-left: 13px; font-size: 16px; }
  .search svg { width: 20px; height: 20px; margin-right: 12px; }
  .search .fit { margin-top: -1px; }
  .apps { display: flex; gap: 5px; margin-left: 4px; }
  .app { width: 50px; height: 52px; display: flex; align-items: center; justify-content: center; border-radius: 5px; position: relative; }
  .app-icon { width: 31px; height: 31px; }
  .app.on { background: #303030; border: 1px solid #3d3d3d; box-shadow: inset -5px 0 #292929; }
  .app.on::after, .app.dot::after { content: ""; position: absolute; bottom: 1px; left: 50%; width: 8px; height: 4px; margin-left: -4px; border-radius: 2px; background: #9b9b9b; }
  .app.on::after { width: 20px; margin-left: -10px; background: #b8aeea; }
  .tray { display: flex; align-items: center; margin: 0 25px 0 auto; }
  .up { width: 14px; height: 8px; margin-right: 26px; }
  .lang, .clock { display: flex; flex-direction: column; font-size: 14.500px; line-height: 20px; margin-top: -1px; }
  .lang { width: 30px; }
  .clock { align-items: flex-end; }
  .wifi { width: 20px; height: 16px; margin-left: 22px; }
  .vol { width: 20px; height: 16px; margin-left: 10px; }
  .battery { width: 20px; height: 16px; margin: 0 20px 0 10px; }
  .badge { width: 20px; height: 20px; margin-left: 9px; border-radius: 50%; background: #b8aeea; color: #222; font-size: 12px; line-height: 20px; text-align: center; }
</style>
